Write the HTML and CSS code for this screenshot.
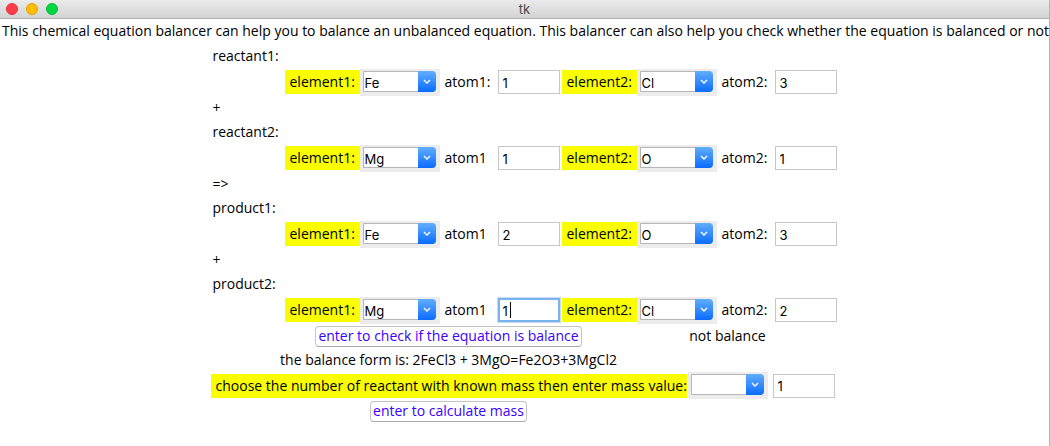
FILE: index.html
```html
<!DOCTYPE html>
<html lang="en">
<head>
<meta charset="utf-8">
<title>tk</title>
<link rel="stylesheet" href="styles.css">
</head>
<body>
<div class="window">
  <header class="titlebar">
    <div class="lights">
      <button class="light close" type="button" aria-label="Close"></button>
      <button class="light minimize" type="button" aria-label="Minimize"></button>
      <button class="light maximize" type="button" aria-label="Maximize"></button>
    </div>
    <span class="title">tk</span>
  </header>
  <main>
    <p class="intro">This chemical equation balancer can help you to balance an unbalanced equation. This balancer can also help you check whether the equation is balanced or not</p>
    <form class="form">
      <p class="line">reactant1:</p>
      <div class="compound">
        <label class="tag" for="r1e1">element1:</label>
        <span class="combo"><select id="r1e1"><option>Fe</option></select><svg class="arrow" viewBox="0 0 18 21"><path d="M6 9l3 3 3-3"/></svg></span>
        <label class="atom" for="r1a1">atom1:</label>
        <input class="entry" id="r1a1" value="1">
        <label class="tag" for="r1e2">element2:</label>
        <span class="combo"><select id="r1e2"><option>Cl</option></select><svg class="arrow" viewBox="0 0 18 21"><path d="M6 9l3 3 3-3"/></svg></span>
        <label class="atom" for="r1a2">atom2:</label>
        <input class="entry" id="r1a2" value="3">
      </div>
      <p class="line">+</p>
      <p class="line">reactant2:</p>
      <div class="compound">
        <label class="tag" for="r2e1">element1:</label>
        <span class="combo"><select id="r2e1"><option>Mg</option></select><svg class="arrow" viewBox="0 0 18 21"><path d="M6 9l3 3 3-3"/></svg></span>
        <label class="atom" for="r2a1">atom1</label>
        <input class="entry" id="r2a1" value="1">
        <label class="tag" for="r2e2">element2:</label>
        <span class="combo"><select id="r2e2"><option>O</option></select><svg class="arrow" viewBox="0 0 18 21"><path d="M6 9l3 3 3-3"/></svg></span>
        <label class="atom" for="r2a2">atom2:</label>
        <input class="entry" id="r2a2" value="1">
      </div>
      <p class="line">=&gt;</p>
      <p class="line">product1:</p>
      <div class="compound">
        <label class="tag" for="p1e1">element1:</label>
        <span class="combo"><select id="p1e1"><option>Fe</option></select><svg class="arrow" viewBox="0 0 18 21"><path d="M6 9l3 3 3-3"/></svg></span>
        <label class="atom" for="p1a1">atom1</label>
        <input class="entry" id="p1a1" value="2">
        <label class="tag" for="p1e2">element2:</label>
        <span class="combo"><select id="p1e2"><option>O</option></select><svg class="arrow" viewBox="0 0 18 21"><path d="M6 9l3 3 3-3"/></svg></span>
        <label class="atom" for="p1a2">atom2:</label>
        <input class="entry" id="p1a2" value="3">
      </div>
      <p class="line">+</p>
      <p class="line">product2:</p>
      <div class="compound">
        <label class="tag" for="p2e1">element1:</label>
        <span class="combo"><select id="p2e1"><option>Mg</option></select><svg class="arrow" viewBox="0 0 18 21"><path d="M6 9l3 3 3-3"/></svg></span>
        <label class="atom" for="p2a1">atom1</label>
        <span class="active-field"><input class="entry active" id="p2a1" value="1"><i class="caret"></i></span>
        <label class="tag" for="p2e2">element2:</label>
        <span class="combo"><select id="p2e2"><option>Cl</option></select><svg class="arrow" viewBox="0 0 18 21"><path d="M6 9l3 3 3-3"/></svg></span>
        <label class="atom" for="p2a2">atom2:</label>
        <input class="entry" id="p2a2" value="2">
      </div>
      <div class="actions">
        <button class="push" type="button">enter to check if the equation is balance</button>
        <output>not balance</output>
      </div>
      <div class="actions">
        <output>the balance form is: 2FeCl3 + 3MgO=Fe2O3+3MgCl2</output>
      </div>
      <div class="actions mass">
        <label class="tag" for="known">choose the number of reactant with known mass then enter mass value:</label>
        <span class="combo"><select id="known"><option></option></select><svg class="arrow" viewBox="0 0 18 21"><path d="M6 9l3 3 3-3"/></svg></span>
        <input class="entry" value="1" aria-label="mass value">
      </div>
      <div class="actions">
        <button class="push" type="button">enter to calculate mass</button>
      </div>
    </form>
  </main>
</div>
</body>
</html>
```
FILE: styles.css
```css
* { box-sizing: border-box; }
body {
  margin: 0;
  background: #fff;
  color: #000;
  font: 14px/24px "Open Sans", "Liberation Sans", sans-serif;
}
p { margin: 0; }
.window {
  min-height: 100vh;
  border-right: 1px solid #b4b4b4;
}
.titlebar {
  display: grid;
  grid-template-columns: 1fr auto 1fr;
  align-items: center;
  height: 19px;
  padding: 0 6px;
  background: linear-gradient(#ebebeb, #d3d3d3);
  border-bottom: 1px solid #b1b1b1;
}
.lights { display: flex; gap: 8px; }
.light {
  width: 12px;
  height: 12px;
  padding: 0;
  border: 1px solid;
  border-radius: 50%;
}
.close { background: #ff3b47; border-color: #e2343f; }
.minimize { background: #ffbd00; border-color: #e0a100; }
.maximize { background: #00d742; border-color: #00bd38; }
.title { color: #4a4a4a; font: 13px/18px Inter, "Liberation Sans", sans-serif; }
.intro { padding-left: 2px; white-space: nowrap; }
.form { width: 628px; margin: 0 auto; }
.line { padding-left: 2px; }
.compound {
  display: grid;
  grid-template-columns: 75px 80px 58px 64px 75px 80px 58px 64px;
  align-items: end;
  height: 28px;
  padding-left: 74px;
}
.tag {
  padding-left: 5px;
  background: #faff00;
  white-space: nowrap;
}
.compound > *, .mass > * { align-self: center; }
.atom { padding-left: 5px; }
.combo {
  position: relative;
  display: block;
  width: 80px;
  height: 27px;
  padding: 2px 4px 4px 3px;
  background: #ececec;
}
select {
  display: block;
  width: 100%;
  height: 21px;
  padding: 2px 0 0 1px;
  appearance: none;
  background: #fff;
  border: 1px solid #b5b5b5;
  border-radius: 0 4px 4px 0;
  color: #000;
  font: 13px/18px Inter, "Liberation Sans", sans-serif;
}
.arrow {
  position: absolute;
  top: 2px;
  right: 4px;
  width: 18px;
  height: 21px;
  border-radius: 0 4px 4px 0;
  background: linear-gradient(#62aefc, #0a6cff);
  fill: none;
  stroke: #fff;
  stroke-width: 1.4;
  pointer-events: none;
}
.entry {
  display: block;
  width: 62px;
  height: 24px;
  padding: 1px 4px 0;
  background: #fff;
  border: 1px solid #c6c6c6;
  color: #000;
  font: 13px/20px Inter, "Liberation Sans", sans-serif;
}
.active-field { position: relative; }
.active {
  border-color: #7ab3f0;
  box-shadow: inset 0 0 0 1px #7ab3f0, 0 0 0 1px #c4defa;
}
.caret {
  position: absolute;
  top: 4px;
  left: 12px;
  width: 1px;
  height: 16px;
  background: #000;
}
main { padding-bottom: 24px; }
.form { padding-top: 1px; }
.actions {
  display: grid;
  grid-template-columns: 476px 82px 70px;
  align-items: center;
  justify-items: center;
  height: 24px;
  white-space: nowrap;
}
.mass { height: 27px; }
.mass .tag { justify-self: stretch; }
.push {
  height: 21px;
  padding: 0 2px;
  background: #fff;
  border: 1px solid #c4c4c4;
  border-bottom-color: #a9a9a9;
  border-radius: 4px;
  color: #3a00ff;
  font: 14px/18px "Open Sans", "Liberation Sans", sans-serif;
}
```
